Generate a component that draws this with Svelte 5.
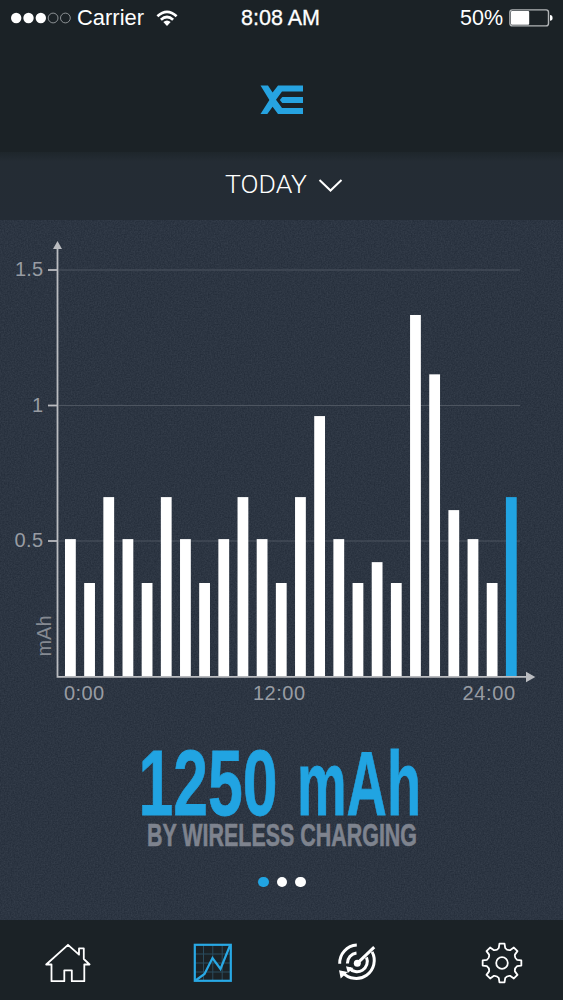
<script>
    let signal = [true, true, true, false, false];
    let pages = [0, 1, 2];
    let activePage = 0;

    //chart geometry
    const base = 676.5;
    const unit = 271;
    const firstBar = 65;
    const step = 19.17;

    let ticks = [
        { label: "1.5", value: 1.5, x: 15, w: 28 },
        { label: "1", value: 1, x: 32, w: 9 },
        { label: "0.5", value: 0.5, x: 14.5, w: 28.5 }
    ];
    let hours = [
        { label: "0:00", x: 64, w: 40 },
        { label: "12:00", x: 253, w: 52 },
        { label: "24:00", x: 462.5, w: 52.5 }
    ];

    //charge per hour in mAh
    let charges = [
        0.507, 0.345, 0.662, 0.507, 0.345, 0.662, 0.507, 0.345,
        0.507, 0.662, 0.507, 0.345, 0.662, 0.961, 0.507, 0.345,
        0.422, 0.345, 1.334, 1.115, 0.614, 0.507, 0.345, 0.662
    ];

    //outline of the settings cog
    function cog(cx, cy, teeth, outer, inner) {
        let d = "";
        const point = (r, a) => (cx + r * Math.sin(a)).toFixed(2) + " " + (cy - r * Math.cos(a)).toFixed(2);
        for(let i = 0; i < teeth; i++){
            let a = i * 2 * Math.PI / teeth;
            d += (i === 0 ? "M" : "L") + point(outer, a - 0.13);
            d += "L" + point(outer, a + 0.13);
            d += "L" + point(inner + 0.8, a + 0.21);
            d += "Q" + point(inner - 1.2, a + Math.PI / teeth) + " " + point(inner + 0.8, a + 2 * Math.PI / teeth - 0.21);
        }
        return d + "Z";
    }
</script>

<div class="phone">
    <header>
        <div class="status">
            <div class="left">
                <svg width="62" height="12" viewBox="0 0 62 12">
                    {#each signal as on, i}
                    <circle class={on ? "dot-on" : "dot-off"} cx={5.2 + i * 12.3} cy="6" r={on ? 5.2 : 4.9} />
                    {/each}
                </svg>
                <svg class="label" width="68" height="30" viewBox="0 0 68 30">
                    <text x="0" y="22" textLength="67" lengthAdjust="spacingAndGlyphs">Carrier</text>
                </svg>
                <svg class="wifi" width="22" height="17" viewBox="0 0 22 17">
                    <path d="M1.4 6.2Q11 -2.4 20.6 6.2" />
                    <path d="M4.9 9.8Q11 4.2 17.1 9.8" />
                    <path class="fill" d="M7.3 12.1Q11 9 14.7 12.1L11 16Z" />
                </svg>
            </div>
            <svg class="time" width="80" height="30" viewBox="0 0 80 30">
                <text x="0" y="22" textLength="79" lengthAdjust="spacingAndGlyphs">8:08 AM</text>
            </svg>
            <div class="right">
                <svg class="label" width="44" height="30" viewBox="0 0 44 30">
                    <text x="0" y="22" textLength="43" lengthAdjust="spacingAndGlyphs">50%</text>
                </svg>
                <svg width="44" height="18" viewBox="0 0 44 18">
                    <rect class="shell" x="0.9" y="0.9" width="38.6" height="16" rx="2.4" />
                    <rect class="fill" x="2" y="2" width="18.2" height="13.8" rx="1" />
                    <path class="fill" d="M41 6Q43.6 6.2 43.6 9T41 11.8Z" />
                </svg>
            </div>
        </div>
        <svg class="logo" width="44" height="32" viewBox="0 0 44 32">
            <path d="M0.5 1.5H8L12.6 8.5L18 1.5H43V7.5H22L16 15.8L22 24H43V30H18L12.6 22.8L7.3 30H0.5L9.4 16Z" />
            <path d="M22.3 12.9H43V19H22.3L19.8 16Z" />
        </svg>
    </header>

    <div class="period">
        <svg width="120" height="40" viewBox="0 0 120 40">
            <text x="3" y="26.5" textLength="82" lengthAdjust="spacingAndGlyphs">TODAY</text>
            <path d="M97.5 14L108.5 24.5L119.5 14" />
        </svg>
    </div>

    <main>
        <svg class="noise" width="563" height="700">
            <filter id="grain" x="0" y="0" width="100%" height="100%" color-interpolation-filters="sRGB">
                <feTurbulence type="fractalNoise" baseFrequency="0.7" numOctaves="2" seed="4" />
                <feColorMatrix type="matrix" values="0.6 0 0 0 -0.12  0.6 0 0 0 -0.085  0.6 0 0 0 -0.035  0 0 0 0 0.16" />
            </filter>
            <rect width="563" height="700" filter="url(#grain)" />
        </svg>

        <svg class="chart" width="563" height="491" viewBox="0 220 563 491">
            {#each ticks as tick}
            <line class="grid" x1="59" x2="520" y1={base - tick.value * unit} y2={base - tick.value * unit} />
            <line class="axis tick" x1="48" x2="57" y1={base - tick.value * unit} y2={base - tick.value * unit} />
            <text x={tick.x} y={base - tick.value * unit + 6} textLength={tick.label.length > 1 ? tick.w : null}>{tick.label}</text>
            {/each}

            {#each charges as charge, i}
            <rect
                class={i === charges.length - 1 ? "bar now" : "bar"}
                x={firstBar + i * step}
                y={base - charge * unit}
                width="10.8"
                height={charge * unit}
            />
            {/each}

            <path class="axis" d="M57.5 247V676.8H527" />
            <path class="arrow" d="M57.5 241L62 249H53ZM535.3 677L526 671.7V682.3Z" />

            {#each hours as hour}
            <text x={hour.x} y="699.5" textLength={hour.w}>{hour.label}</text>
            {/each}
            <text class="axis-name" transform="translate(50.5 656.5) rotate(-90)" textLength="41" lengthAdjust="spacingAndGlyphs">mAh</text>
        </svg>

        <svg class="total" width="321" height="128" viewBox="120 730 321 128">
            <text class="amount" x="137.5" y="815" textLength="139" lengthAdjust="spacingAndGlyphs">1250</text>
            <text class="amount unit" x="296" y="815" textLength="124" lengthAdjust="spacingAndGlyphs">mAh</text>
            <text class="source" x="146" y="846" textLength="270" lengthAdjust="spacingAndGlyphs">BY WIRELESS CHARGING</text>
        </svg>

        <div class="pager">
            {#each pages as page}
            <span class:active={page === activePage}></span>
            {/each}
        </div>
    </main>

    <nav>
        <svg width="48" height="42" viewBox="0 0 48 42">
            <path class="line" d="M7.5 22.5H2.2L24 2.8L35 12.7V6.4H39.8V17L45.6 22.5H40.3V39.2H27.8V28.3H20.3V39.2H7.5Z" />
        </svg>
        <svg width="40" height="40" viewBox="1 0 40 40">
            <path class="mesh" d="M10.5 2V38M19.8 2V38M29.2 2V38M2 11H38M2 20H38M2 29H38" />
            <rect class="frame" x="1.8" y="1.8" width="36" height="36" />
            <path class="trend" d="M2.5 37.5L11.5 31L19.5 15L27.5 26L37 2.5" />
        </svg>
        <svg width="42" height="42" viewBox="0 0 42 42">
            <path class="ring" d="M2.7 21.8A18 18 0 0 1 19.8 3.1" />
            <path class="ring" d="M10.4 21.5A10.3 10.3 0 0 1 19.5 11" />
            <path class="ring" d="M35.1 9.9A18 18 0 0 1 5.8 30.4" />
            <path class="ring" d="M29.5 15.4A10.3 10.3 0 0 1 12.1 26" />
            <path class="ring" d="M20.5 21.2L37.2 5.1" />
            <circle class="fill" cx="20.3" cy="21.2" r="3.5" />
            <path class="fill" d="M2 28.2L10.6 30.1L3.7 36.5ZM9 24.2L16.5 26L10.8 31Z" />
        </svg>
        <svg width="42" height="42" viewBox="0 0 42 42">
            <path class="line" d={cog(21, 21, 8, 19.5, 14.6)} />
            <circle class="line" cx="21" cy="21" r="5.8" />
        </svg>
    </nav>
</div>

<style>
    :global(body){
        margin: 0;
        background-color: #1b2226;
    }
    .phone{
        width: 563px;
        height: 1000px;
        display: flex;
        flex-direction: column;
        font-family: "Liberation Sans", Arial, sans-serif;
        background-color: #1b2226;
        overflow: hidden;
    }
    svg{
        display: block;
        flex-shrink: 0;
        overflow: visible;
    }
    header{
        height: 152px;
        display: flex;
        flex-direction: column;
        align-items: center;
    }
    .status{
        width: 542px;
        height: 36px;
        padding: 0 10px 0 11px;
        display: grid;
        grid-template-columns: 230px 80px 1fr;
        align-items: center;
    }
    .status text{
        fill: #fff;
        font-size: 21.5px;
    }
    .time text{
        stroke: #fff;
        stroke-width: 0.3;
    }
    .left, .right{
        display: flex;
        align-items: center;
    }
    .left .label{
        margin: 0 11px 0 4px;
    }
    .right{
        justify-content: flex-end;
        gap: 5px;
    }
    .dot-on, .fill{
        fill: #fff;
    }
    .dot-off{
        fill: none;
        stroke: #999da0;
        stroke-width: 0.9;
    }
    .wifi path{
        fill: none;
        stroke: #fff;
        stroke-width: 2.7;
    }
    .wifi .fill{
        fill: #fff;
        stroke: none;
    }
    .shell{
        fill: none;
        stroke: #b2b5b7;
        stroke-width: 1.4;
    }
    .logo{
        margin-top: 48px;
        fill: #26a3e0;
    }
    .period{
        height: 68px;
        display: flex;
        justify-content: center;
        align-items: center;
        background: linear-gradient(#1e262b, #242c34 14%, #242c35);
    }
    .period text{
        font-family: Roboto, "Liberation Sans", sans-serif;
        font-weight: 300;
        font-size: 26.5px;
        fill: #fff;
    }
    .period path{
        fill: none;
        stroke: #fff;
        stroke-width: 2;
    }
    main{
        position: relative;
        height: 700px;
        display: flex;
        flex-direction: column;
        align-items: center;
        background-color: #2c3542;
    }
    .noise{
        position: absolute;
        top: 0;
        left: 0;
    }
    .chart, .total, .pager{
        position: relative;
    }
    .chart text{
        font-size: 20px;
        fill: #989ca3;
    }
    .chart .axis-name{
        font-size: 20px;
        fill: #858a92;
    }
    .grid{
        stroke: #4d5560;
        stroke-width: 1;
    }
    .axis{
        fill: none;
        stroke: #babcc0;
        stroke-width: 1.8;
    }
    .arrow{
        fill: #babcc0;
    }
    .bar{
        fill: #fff;
    }
    .now{
        fill: #21a4e2;
    }
    .total{
        margin-top: 19px;
    }
    .total text{
        font-family: "Liberation Sans Narrow", "Liberation Sans", sans-serif;
        font-weight: bold;
    }
    .total .amount{
        font-size: 93px;
        fill: #21a4e2;
        stroke: #21a4e2;
        stroke-width: 0.8;
    }
    .total .unit{
        font-size: 90px;
    }
    .total .source{
        font-size: 31.5px;
        fill: #7e838e;
        stroke: #7e838e;
        stroke-width: 0.6;
    }
    .pager{
        display: flex;
        gap: 8px;
        margin: 19px 0 0 1px;
    }
    .pager span{
        width: 10.4px;
        height: 10.4px;
        border-radius: 50%;
        background-color: #fff;
    }
    .pager .active{
        background-color: #21a4e2;
    }
    nav{
        height: 75px;
        padding: 5px 40px 0 44px;
        display: flex;
        justify-content: space-between;
        align-items: center;
        background-color: #1b2226;
    }
    .line{
        fill: none;
        stroke: #fff;
        stroke-width: 1.8;
        stroke-linejoin: round;
    }
    .mesh{
        fill: none;
        stroke: #2b4c5e;
        stroke-width: 1;
    }
    .frame, .trend{
        fill: none;
        stroke: #29a9e5;
        stroke-width: 2.2;
    }
    .ring{
        fill: none;
        stroke: #fff;
        stroke-width: 3;
    }
</style>
